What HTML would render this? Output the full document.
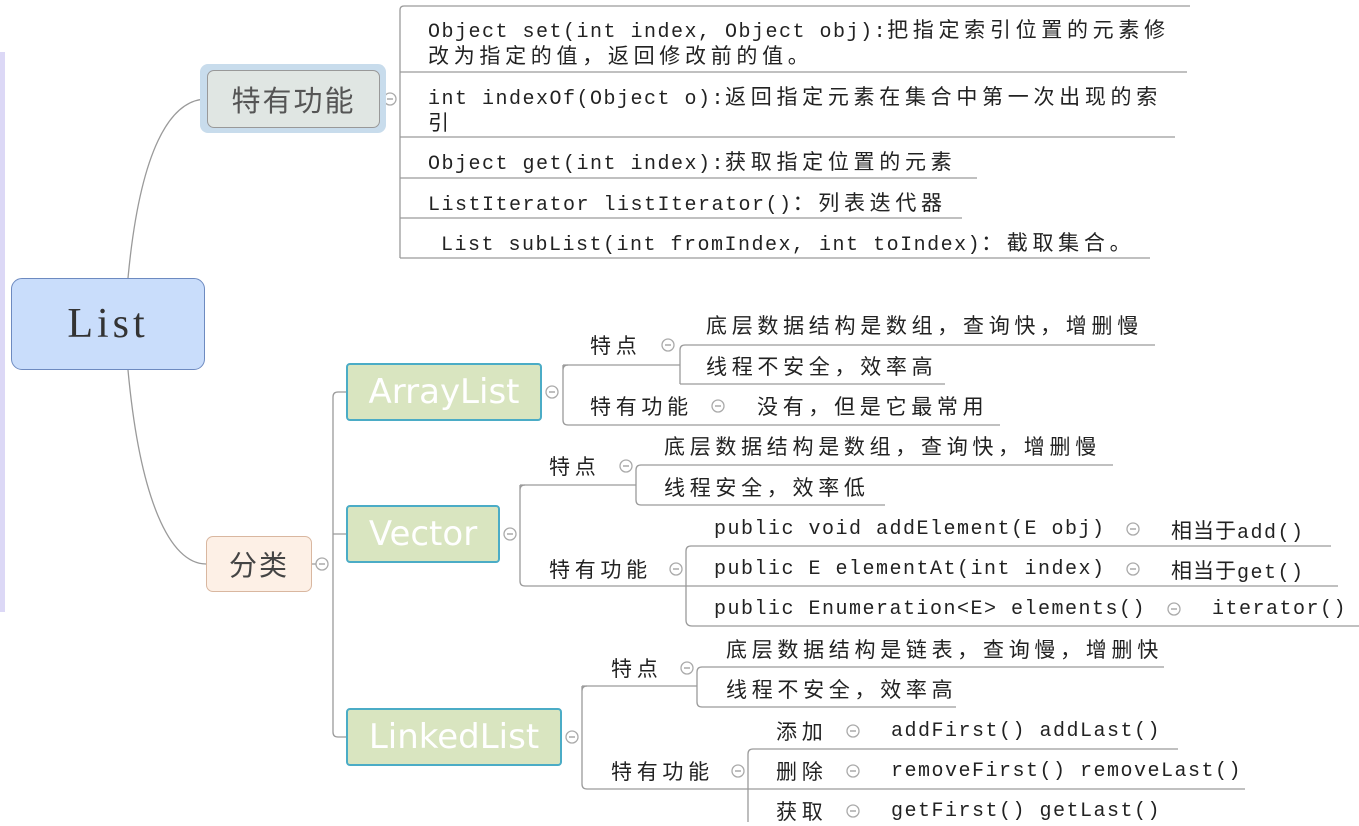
<!DOCTYPE html>
<html><head><meta charset="utf-8"><style>
body{margin:0;width:1359px;height:822px;background:#fff;position:relative;overflow:hidden;font-family:"Liberation Mono","Noto Sans CJK SC",monospace;color:#222}
.t{position:absolute;white-space:pre;font-size:20px;line-height:24px;letter-spacing:1.5px;margin-top:1px}
.c{font-family:"Noto Sans CJK SC",sans-serif;font-size:21px;letter-spacing:4.7px}
.n{position:absolute;box-sizing:border-box;display:flex;align-items:center;justify-content:center;white-space:nowrap}
.g{background:#d9e5c0;border:2px solid #4bacc6;border-radius:4px;color:#fff;font-family:"DejaVu Sans","Liberation Sans",sans-serif;font-size:34px}
</style></head><body>
<div style="position:absolute;left:0;top:52px;width:5px;height:560px;background:#dcd8f6"></div>
<svg width="1359" height="822" style="position:absolute;left:0;top:0" fill="none" stroke="#9a9a9a" stroke-width="1.3">
<path d="M128 278 C140 150 170 99 207 99"/>
<path d="M128 370 C140 500 170 564 206 564"/>
<path d="M400 258 V10 Q400 6 404 6 H1190"/>
<path d="M400 72 H1187 M400 137 H1175 M400 178 H977 M400 218 H962 M400 258 H1150"/>
<path d="M346 392 H338 Q333 392 333 397 V732 Q333 737 338 737 H346 M333 534 H346 M312 564 H316"/>
<path d="M563 365 H680 M680 384 V350 Q680 345 685 345 H1155 M680 384 H945"/>
<path d="M563 370 Q563 365 568 365 M563 365 V420 Q563 425 568 425 H1000"/>
<path d="M520 485 H636 M636 500 V470 Q636 465 641 465 H1113 M636 500 Q636 505 641 505 H885"/>
<path d="M520 490 Q520 485 525 485 M520 485 V581 Q520 586 525 586 H686 M686 620 V551 Q686 546 691 546 H1331 M686 586 H1338 M686 620 Q686 626 692 626 H1359"/>
<path d="M582 686 H697 M697 702 V672 Q697 667 702 667 H1164 M697 702 Q697 707 702 707 H956"/>
<path d="M582 691 Q582 686 587 686 M582 686 V784 Q582 789 587 789 H748 M748 822 V754 Q748 749 753 749 H1178 M748 789 H1245"/>
<g fill="#fff" stroke="#aaa"><circle cx="390" cy="99" r="6"/><circle cx="322" cy="564" r="6"/><circle cx="552" cy="392" r="6"/><circle cx="668" cy="345" r="6"/><circle cx="718" cy="406" r="6"/><circle cx="510" cy="534" r="6"/><circle cx="626" cy="466" r="6"/><circle cx="676" cy="569" r="6"/><circle cx="1133" cy="529" r="6"/><circle cx="1133" cy="569" r="6"/><circle cx="1174" cy="609" r="6"/><circle cx="572" cy="737" r="6"/><circle cx="687" cy="668" r="6"/><circle cx="738" cy="771" r="6"/><circle cx="853" cy="731" r="6"/><circle cx="853" cy="771" r="6"/><circle cx="853" cy="811" r="6"/></g>
<g stroke="#999"><path d="M387 99h6M319 564h6M549 392h6M665 345h6M715 406h6M507 534h6M623 466h6M673 569h6M1130 529h6M1130 569h6M1171 609h6M569 737h6M684 668h6M735 771h6M850 731h6M850 771h6M850 811h6"/></g>
</svg>
<div class="n" style="left:11px;top:278px;width:194px;height:92px;background:#c9ddfb;border:1.5px solid #6d8ac0;border-radius:11px;font-family:'Liberation Serif',serif;font-size:42px;letter-spacing:4px;color:#333">List</div>
<div style="position:absolute;left:200px;top:64px;width:186px;height:69px;background:#c8dcec;border-radius:8px"></div>
<div class="n" style="left:207px;top:70px;width:173px;height:58px;background:#e0e6e3;border:1.5px solid #999;border-radius:7px;font-family:'Noto Sans CJK SC',sans-serif;font-size:29px;color:#555;letter-spacing:2px">特有功能</div>
<div class="n" style="left:206px;top:536px;width:106px;height:56px;background:#fdf0e6;border:1.5px solid #d9b7a0;border-radius:7px;font-family:'Noto Sans CJK SC',sans-serif;font-size:28px;color:#444;letter-spacing:2px">分类</div>
<div class="n g" style="left:346px;top:363px;width:196px;height:58px">ArrayList</div>
<div class="n g" style="left:346px;top:505px;width:154px;height:58px">Vector</div>
<div class="n g" style="left:346px;top:708px;width:216px;height:58px">LinkedList</div>

<div class="t" style="left:428px;top:17px;line-height:22px">Object set(int index, Object obj):<span class="c">把指定索引位置的元素修</span>
<span class="c">改为指定的值，返回修改前的值。</span></div>
<div class="t" style="left:428px;top:84px;line-height:22px">int indexOf(Object o):<span class="c">返回指定元素在集合中第一次出现的索</span>
<span class="c">引</span></div>
<div class="t" style="left:428px;top:148px">Object get(int index):<span class="c">获取指定位置的元素</span></div>
<div class="t" style="left:428px;top:189px">ListIterator listIterator()<span class="c">：列表迭代器</span></div>
<div class="t" style="left:441px;top:229px">List subList(int fromIndex, int toIndex)<span class="c">：截取集合。</span></div>

<div class="t c" style="left:590px;top:332px">特点</div>
<div class="t c" style="left:706px;top:312px">底层数据结构是数组，查询快，增删慢</div>
<div class="t c" style="left:706px;top:353px">线程不安全，效率高</div>
<div class="t c" style="left:590px;top:393px">特有功能</div>
<div class="t c" style="left:757px;top:393px">没有，但是它最常用</div>

<div class="t c" style="left:549px;top:453px">特点</div>
<div class="t c" style="left:664px;top:433px">底层数据结构是数组，查询快，增删慢</div>
<div class="t c" style="left:664px;top:474px">线程安全，效率低</div>
<div class="t c" style="left:549px;top:556px">特有功能</div>
<div class="t" style="left:714px;top:517px">public void addElement(E obj)</div>
<div class="t" style="left:1171px;top:517px"><span class="c" style="letter-spacing:1px">相当于</span>add()</div>
<div class="t" style="left:714px;top:557px">public E elementAt(int index)</div>
<div class="t" style="left:1171px;top:557px"><span class="c" style="letter-spacing:1px">相当于</span>get()</div>
<div class="t" style="left:714px;top:597px">public Enumeration&lt;E&gt; elements()</div>
<div class="t" style="left:1212px;top:597px">iterator()</div>

<div class="t c" style="left:611px;top:655px">特点</div>
<div class="t c" style="left:726px;top:636px">底层数据结构是链表，查询慢，增删快</div>
<div class="t c" style="left:726px;top:676px">线程不安全，效率高</div>
<div class="t c" style="left:611px;top:758px">特有功能</div>
<div class="t c" style="left:776px;top:718px">添加</div>
<div class="t" style="left:891px;top:719px">addFirst() addLast()</div>
<div class="t c" style="left:776px;top:758px">删除</div>
<div class="t" style="left:891px;top:759px">removeFirst() removeLast()</div>
<div class="t c" style="left:776px;top:798px">获取</div>
<div class="t" style="left:891px;top:799px">getFirst() getLast()</div>
</body></html>
